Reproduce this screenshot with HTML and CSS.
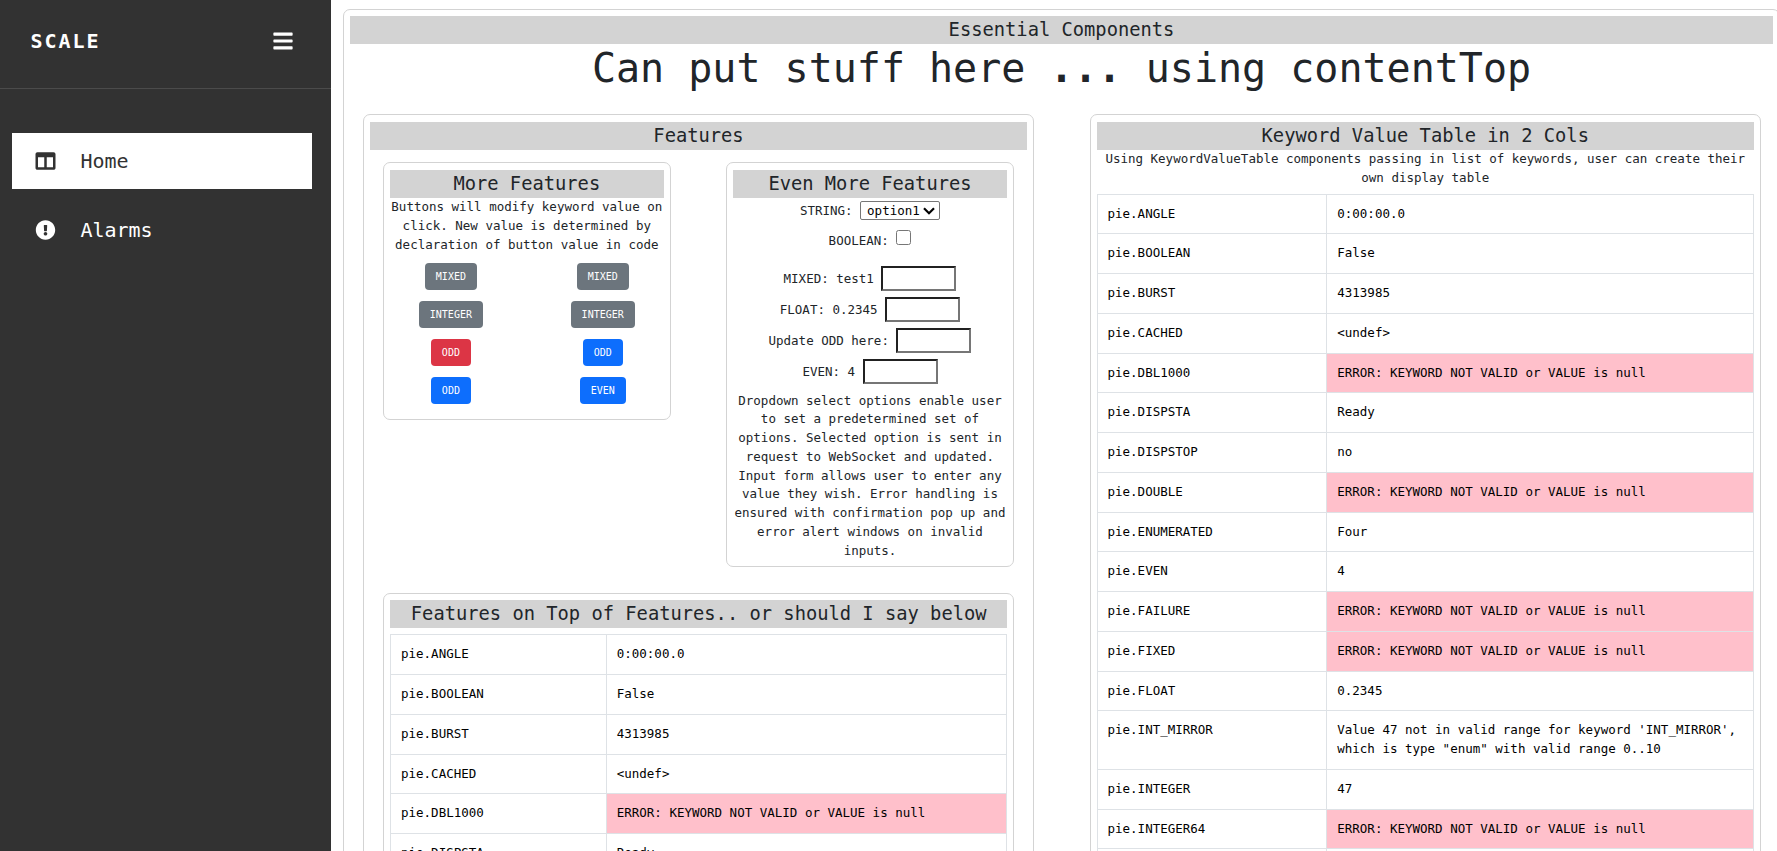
FILE: index.html
```html
<!DOCTYPE html>
<html lang="en">
<head>
<meta charset="utf-8">
<title>SCALE</title>
<link rel="stylesheet" href="styles.css">
</head>
<body>
<div class="app">
  <aside class="sidebar">
    <div class="brand">
      <span class="brand-name">SCALE</span>
      <svg class="bars" viewBox="0 0 448 512" fill="currentColor"><path d="M16 132h416c8.837 0 16-7.163 16-16V76c0-8.837-7.163-16-16-16H16C7.163 60 0 67.163 0 76v40c0 8.837 7.163 16 16 16zm0 160h416c8.837 0 16-7.163 16-16v-40c0-8.837-7.163-16-16-16H16c-8.837 0-16 7.163-16 16v40c0 8.837 7.163 16 16 16zm0 160h416c8.837 0 16-7.163 16-16v-40c0-8.837-7.163-16-16-16H16c-8.837 0-16 7.163-16 16v40c0 8.837 7.163 16 16 16z"/></svg>
    </div>
    <nav class="nav">
      <a class="nav-item active"><svg class="nav-icon" viewBox="0 0 512 512" fill="currentColor"><path d="M464 32H48C21.49 32 0 53.49 0 80v352c0 26.51 21.49 48 48 48h416c26.51 0 48-21.49 48-48V80c0-26.51-21.49-48-48-48zM224 416H64V160h160v256zm224 0H288V160h160v256z"/></svg><span>Home</span></a>
      <a class="nav-item"><svg class="nav-icon" viewBox="0 0 512 512" fill="currentColor"><path d="M504 256c0 136.997-111.043 248-248 248S8 392.997 8 256C8 119.083 119.043 8 256 8s248 111.083 248 248zm-248 50c-25.405 0-46 20.595-46 46s20.595 46 46 46 46-20.595 46-46-20.595-46-46-46zm-43.673-165.346l7.418 136c.347 6.364 5.609 11.346 11.982 11.346h48.546c6.373 0 11.635-4.982 11.982-11.346l7.418-136c.375-6.874-5.098-12.654-11.982-12.654h-63.383c-6.884 0-12.356 5.78-11.981 12.654z"/></svg><span>Alarms</span></a>
    </nav>
  </aside>
  <main class="panel root">
    <div class="title">Essential Components</div>
    <h1 class="headline">Can put stuff here <span class="dots">...</span> using contentTop</h1>
    <div class="columns">
      <section class="panel inner">
        <div class="title">Features</div>
        <div class="columns nested">
          <section class="panel inner">
            <div class="title">More Features</div>
            <p class="text">Buttons will modify keyword value on click. New value is determined by declaration of button value in code</p>
            <div class="buttons">
              <button class="btn gray">MIXED</button><button class="btn gray">MIXED</button>
              <button class="btn gray">INTEGER</button><button class="btn gray">INTEGER</button>
              <button class="btn red">ODD</button><button class="btn blue">ODD</button>
              <button class="btn blue">ODD</button><button class="btn blue">EVEN</button>
            </div>
          </section>
          <section class="panel inner">
            <div class="title">Even More Features</div>
            <div class="form">
              <div class="row string">STRING: <span class="select"><span>option1</span><svg class="chevron" viewBox="0 0 12 8" fill="none" stroke="currentColor" stroke-width="2.2"><path d="M1 1.2l5 5 5-5"/></svg></span></div>
              <div class="row bool">BOOLEAN: <input class="check" type="checkbox"></div>
              <div class="row">MIXED: test1 <input class="field" type="text"></div>
              <div class="row">FLOAT: 0.2345 <input class="field" type="text"></div>
              <div class="row">Update ODD here: <input class="field" type="text"></div>
              <div class="row">EVEN: 4 <input class="field" type="text"></div>
            </div>
            <p class="text">Dropdown select options enable user to set a predetermined set of options. Selected option is sent in request to WebSocket and updated. Input form allows user to enter any value they wish. Error handling is ensured with confirmation pop up and error alert windows on invalid inputs.</p>
          </section>
        </div>
        <section class="panel inner below">
          <div class="title">Features on Top of Features.. or should I say below</div>
          <table class="table">
            <tr><td>pie.ANGLE</td><td>0:00:00.0</td></tr>
            <tr><td>pie.BOOLEAN</td><td>False</td></tr>
            <tr><td>pie.BURST</td><td>4313985</td></tr>
            <tr><td>pie.CACHED</td><td>&lt;undef&gt;</td></tr>
            <tr><td>pie.DBL1000</td><td class="error">ERROR: KEYWORD NOT VALID or VALUE is null</td></tr>
            <tr><td>pie.DISPSTA</td><td>Ready</td></tr>
          </table>
        </section>
      </section>
      <section class="panel inner">
        <div class="title">Keyword Value Table in 2 Cols</div>
        <p class="text">Using KeywordValueTable components passing in list of keywords, user can create their own display table</p>
        <table class="table">
          <tr><td>pie.ANGLE</td><td>0:00:00.0</td></tr>
          <tr><td>pie.BOOLEAN</td><td>False</td></tr>
          <tr><td>pie.BURST</td><td>4313985</td></tr>
          <tr><td>pie.CACHED</td><td>&lt;undef&gt;</td></tr>
          <tr><td>pie.DBL1000</td><td class="error">ERROR: KEYWORD NOT VALID or VALUE is null</td></tr>
          <tr><td>pie.DISPSTA</td><td>Ready</td></tr>
          <tr><td>pie.DISPSTOP</td><td>no</td></tr>
          <tr><td>pie.DOUBLE</td><td class="error">ERROR: KEYWORD NOT VALID or VALUE is null</td></tr>
          <tr><td>pie.ENUMERATED</td><td>Four</td></tr>
          <tr><td>pie.EVEN</td><td>4</td></tr>
          <tr><td>pie.FAILURE</td><td class="error">ERROR: KEYWORD NOT VALID or VALUE is null</td></tr>
          <tr><td>pie.FIXED</td><td class="error">ERROR: KEYWORD NOT VALID or VALUE is null</td></tr>
          <tr><td>pie.FLOAT</td><td>0.2345</td></tr>
          <tr><td>pie.INT_MIRROR</td><td>Value 47 not in valid range for keyword 'INT_MIRROR', which is type "enum" with valid range 0..10</td></tr>
          <tr><td>pie.INTEGER</td><td>47</td></tr>
          <tr><td>pie.INTEGER64</td><td class="error">ERROR: KEYWORD NOT VALID or VALUE is null</td></tr>
          <tr><td></td><td></td></tr>
        </table>
      </section>
    </div>
  </main>
</div>
</body>
</html>
```
FILE: styles.css
```css
* { box-sizing: border-box; }
body {
  margin: 0;
  height: 851px;
  overflow: hidden;
  background: #fff;
  color: #212529;
  font: 12.5px/18.75px "DejaVu Sans Mono", monospace;
}
.app { display: flex; align-items: flex-start; height: 851px; overflow: hidden; }

.sidebar { flex: 0 0 331px; height: 851px; background: #323232; color: #fff; }
.brand {
  display: flex;
  justify-content: space-between;
  align-items: center;
  height: 89px;
  padding: 0 38px 6px 30.4px;
  border-bottom: 1px solid #4b4b4b;
}
.brand-name { font-size: 20px; font-weight: bold; letter-spacing: 2px; }
.bars { width: 20px; height: 22px; }
.nav { display: flex; flex-direction: column; gap: 13px; padding: 44px 19px 0 12px; }
.nav-item { display: flex; align-items: center; gap: 24.4px; height: 56px; padding-left: 23px; font-size: 20px; }
.nav-item.active { background: #fff; color: #323232; }
.nav-icon { width: 21px; height: 20px; }

.panel { border: 1px solid lightgray; border-radius: 7px; padding: 6px; }
.root { flex: 0 0 1437px; margin: 9px 0 0 12px; }
.title { height: 28px; background: lightgray; text-align: center; font-size: 18.75px; line-height: 28px; }
.headline { margin: 0 0 22px; text-align: center; font-size: 40px; font-weight: 400; line-height: 48px; }
.dots { font-weight: bold; }
.columns { display: grid; grid-template-columns: 671px 671.5px; gap: 55.5px; padding-left: 13px; align-items: start; }
.nested { grid-template-columns: 287.6px 288px; gap: 55.4px; padding: 12px 0 0 13px; }
.inner { padding-top: 7px; }
.text { margin: 0; text-align: center; }

.buttons {
  display: grid;
  grid-template-columns: 1fr 1fr;
  justify-items: center;
  gap: 11px 30px;
  padding: 9px 0;
}
.btn {
  height: 27px;
  padding: 0 10px;
  border: 1px solid transparent;
  border-radius: 4px;
  color: #fff;
  font: 10px/15px "DejaVu Sans Mono", monospace;
}
.gray { background-color: #6c757d; }
.red { background-color: #dc3545; }
.blue { background-color: #0d6efd; }

.form { padding-bottom: 1px; }
.row { height: 31.25px; text-align: center; white-space: nowrap; }
.string { padding-top: 3px; }
.bool { height: 36.4px; padding-top: 2px; }
.select {
  display: inline-flex;
  align-items: center;
  justify-content: space-between;
  width: 80px;
  height: 19px;
  padding: 0 4px 0 6px;
  border: 1px solid #767676;
  border-radius: 2px;
  color: #000;
  line-height: 17px;
}
.chevron { width: 12px; height: 8px; }
.check { width: 15px; height: 15px; margin: 0; vertical-align: -1px; position: relative; top: -1px; }
.bool { line-height: 20px; }
.field {
  width: 75px;
  height: 25px;
  padding: 1px 2px;
  border: 2px solid;
  border-color: #212121 #767676 #767676 #212121;
  font: inherit;
}

.below { width: 631.4px; margin: 26px 0 0 13px; padding-top: 6px; }
.table {
  width: 100%;
  margin-top: 6px;
  border-collapse: collapse;
  table-layout: fixed;
  color: #000;
}
.table td { padding: 10px; border: 1px solid #dee2e6; vertical-align: top; }
.table td:first-child { width: 35%; }
.error { background: pink; }
```
